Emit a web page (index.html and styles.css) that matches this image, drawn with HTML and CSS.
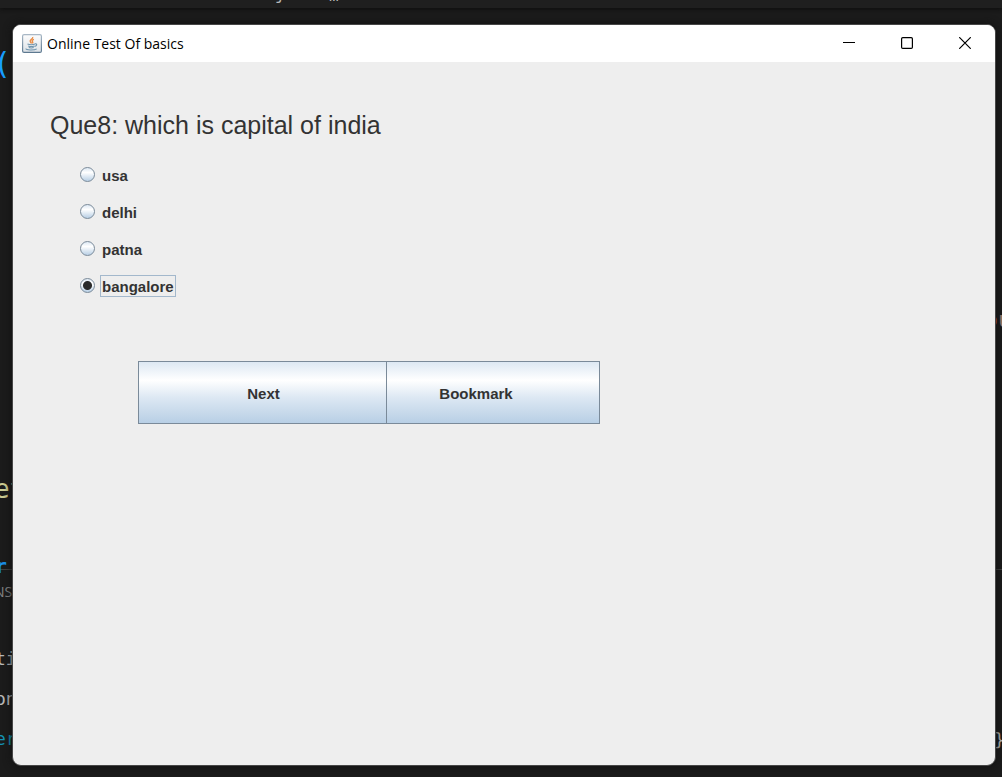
FILE: index.html
```html
<!DOCTYPE html>
<html lang="en">
<head>
<meta charset="utf-8">
<title>Online Test Of basics</title>
<link rel="stylesheet" href="styles.css">
</head>
<body>
<div class="desktop">
  <div class="editor" aria-hidden="true">
    <div class="editor-top"></div>
    <div class="panel-line"></div>
    <span class="code c-brace">j</span>
    <span class="code c-dots">m</span>
    <span class="code c-paren">(</span>
    <span class="code c-get">et</span>
    <span class="code c-kw">r</span>
    <span class="code c-tab">NSO</span>
    <span class="code c-ti">ti</span>
    <span class="code c-on">on</span>
    <span class="code c-er">er</span>
    <span class="code c-str">o</span>
    <span class="code c-out">u</span>
    <span class="code c-close">}</span>
  </div>
  <main class="window">
    <header class="titlebar">
      <svg class="app-icon" viewBox="0 0 20 19" width="20" height="19" aria-hidden="true">
        <defs>
          <linearGradient id="tile" x1="0" y1="0" x2="0" y2="1">
            <stop offset="0" stop-color="#fdfdfd"/>
            <stop offset="1" stop-color="#dce1e6"/>
          </linearGradient>
          <linearGradient id="edge" x1="0" y1="0" x2="0" y2="1">
            <stop offset="0" stop-color="#a9b8c6"/>
            <stop offset="1" stop-color="#5d7990"/>
          </linearGradient>
        </defs>
        <rect x=".6" y=".6" width="18.8" height="17.8" rx="1.5" fill="url(#tile)" stroke="url(#edge)" stroke-width="1.2"/>
        <path d="M10.700 3c.8 2-3.400 2.700-2.500 4.500.3.800 1 1.200 1.300 1.900M11.900 5.300c-2.200 1-2.300 1.600-1.200 2.700.4.500.1.900-.3 1.400" fill="none" stroke="#e8873d" stroke-width="1.300"/>
        <path d="M5.500 10c2 .8 5.500.8 7.500 0M6.200 11.900c1.800.7 4.500.7 6.100 0M6.800 13.600c1.500.5 3.500.5 4.900 0M13 9.700c2.600-.2 2 2.200-.4 2.700M4.200 14.500c-1.200 1.900 8.200 2.100 10.500.4" fill="none" stroke="#6f94ad" stroke-width="1.100"/>
      </svg>
      <span class="title">Online Test Of basics</span>
      <div class="controls">
        <button type="button" class="control" aria-label="Minimize"><svg width="12" height="12" viewBox="0 0 12 12"><path d="M0 5.500h12"/></svg></button>
        <button type="button" class="control" aria-label="Maximize"><svg width="12" height="12" viewBox="0 0 12 12"><rect x=".6" y=".6" width="10.800" height="10.800" rx="1.200"/></svg></button>
        <button type="button" class="control" aria-label="Close"><svg width="12" height="12" viewBox="0 0 12 12"><path d="M.2.200l11.600 11.600M11.800.200L.2 11.800"/></svg></button>
      </div>
    </header>
    <form class="quiz">
      <h1 class="question" id="question">Que8: which is capital of india</h1>
      <div class="options" role="radiogroup" aria-labelledby="question">
        <div class="option"><input class="radio" type="radio" name="answer" id="a1"><label class="option-text" for="a1">usa</label></div>
        <div class="option"><input class="radio" type="radio" name="answer" id="a2"><label class="option-text" for="a2">delhi</label></div>
        <div class="option"><input class="radio" type="radio" name="answer" id="a3"><label class="option-text" for="a3">patna</label></div>
        <div class="option"><input class="radio" type="radio" name="answer" id="a4" checked><label class="option-text" for="a4">bangalore</label></div>
      </div>
      <div class="actions">
        <button type="button" class="action next">Next</button>
        <button type="button" class="action bookmark">Bookmark</button>
      </div>
    </form>
  </main>
</div>
</body>
</html>
```
FILE: styles.css
```css
* { box-sizing: border-box; }

body { margin: 0; background: #1b1b1b; }

.desktop {
  position: relative;
  display: flex;
  min-height: 100vh;
  padding: 24px 6px 11px 12px;
  overflow: hidden;
}

/* Code editor showing round the edges of the window */
.editor { position: absolute; inset: 0; overflow: hidden; }
.editor-top { height: 8px; background: #1f1f1f; box-shadow: 0 1px 4px #0c0c0c; }
.panel-line { position: absolute; top: 569px; left: 0; right: 0; height: 1px; background: #414141; }
.code {
  position: absolute;
  font: 18px/20px "DejaVu Sans Mono", monospace;
  color: #b8b8b8;
}
.c-brace { left: 275px; top: -15px; font-size: 16px; }
.c-dots { left: 329px; top: -14px; font-size: 16px; }
.c-paren { left: -7px; top: 49px; font-size: 30px; line-height: 30px; color: #179fff; }
.c-get { left: -6px; top: 474px; font-size: 26px; line-height: 30px; color: #cccc93; }
.c-kw { left: -5px; top: 556px; font-size: 20px; font-weight: 700; color: #1a8fe8; }
.c-tab { left: -6px; top: 582px; font: 14px/20px "Open Sans", sans-serif; color: #858585; }
.c-ti { left: -5px; top: 649px; }
.c-on { left: -5px; top: 689px; }
.c-er { left: -5px; top: 729px; color: #1593b5; }
.c-str { left: 987px; top: 310px; color: #d2622f; }
.c-out { left: 998px; top: 310px; color: #a08078; font-size: 22px; }
.c-close { left: 994px; top: 730px; }

.window {
  position: relative;
  flex: 1;
  display: flex;
  flex-direction: column;
  overflow: hidden;
  border: 1px solid #464646;
  border-radius: 9px;
  background: #eeeeee;
  box-shadow: 0 0 8px #101010;
}

.titlebar {
  display: flex;
  align-items: center;
  height: 37px;
  padding-left: 9px;
  background: #ffffff;
}
.app-icon { flex: none; }
.title {
  margin-left: 5px;
  font: 14px/20px "Open Sans", sans-serif;
  color: #000000;
}
.controls { display: flex; margin-left: auto; padding-right: 1px; }
.control {
  display: flex;
  align-items: center;
  justify-content: center;
  width: 58px;
  height: 36px;
  padding: 0 1px 1px 0;
  border: 0;
  background: none;
}
.control svg { fill: none; stroke: #000000; stroke-width: 1.2; }

.quiz {
  flex: 1;
  padding: 52px 37px;
  font-family: "Liberation Sans", Arial, sans-serif;
  color: #333333;
}
.question {
  margin: 0;
  font-size: 25px;
  font-weight: 400;
  line-height: 23px;
}

.options {
  display: flex;
  flex-direction: column;
  gap: 15px;
  margin-top: 27px;
  padding-left: 30px;
}
.option { display: flex; align-items: center; gap: 5px; height: 22px; }
.radio {
  appearance: none;
  width: 15px;
  height: 15px;
  margin: 0 0 1px;
  border: 1px solid #7a8a99;
  border-radius: 50%;
  background: linear-gradient(#dde8f3, #ffffff 35%, #b8cfe5);
}
.radio:checked {
  background:
    radial-gradient(circle, #2b2b2b 4px, transparent 5px),
    linear-gradient(#dde8f3, #ffffff 35%, #b8cfe5);
}
.option-text {
  padding: 2px 1px 0;
  border: 1px solid transparent;
  font-size: 15px;
  font-weight: 700;
  line-height: 18px;
}
.radio:checked + .option-text { border-color: #a3b8cc; }

.actions { display: flex; margin-top: 64px; padding-left: 88px; }
.action {
  height: 63px;
  border: 1px solid #7a8a99;
  border-radius: 0;
  background: linear-gradient(#dde8f3, #ffffff 30%, #dde8f3 58%, #b8cfe5);
  font: 700 15px/20px "Liberation Sans", Arial, sans-serif;
  color: #333333;
}
.next { width: 249px; padding: 2px 0 0 2px; }
.bookmark { width: 213px; padding: 2px 34px 0 0; border-left: 0; }
```
